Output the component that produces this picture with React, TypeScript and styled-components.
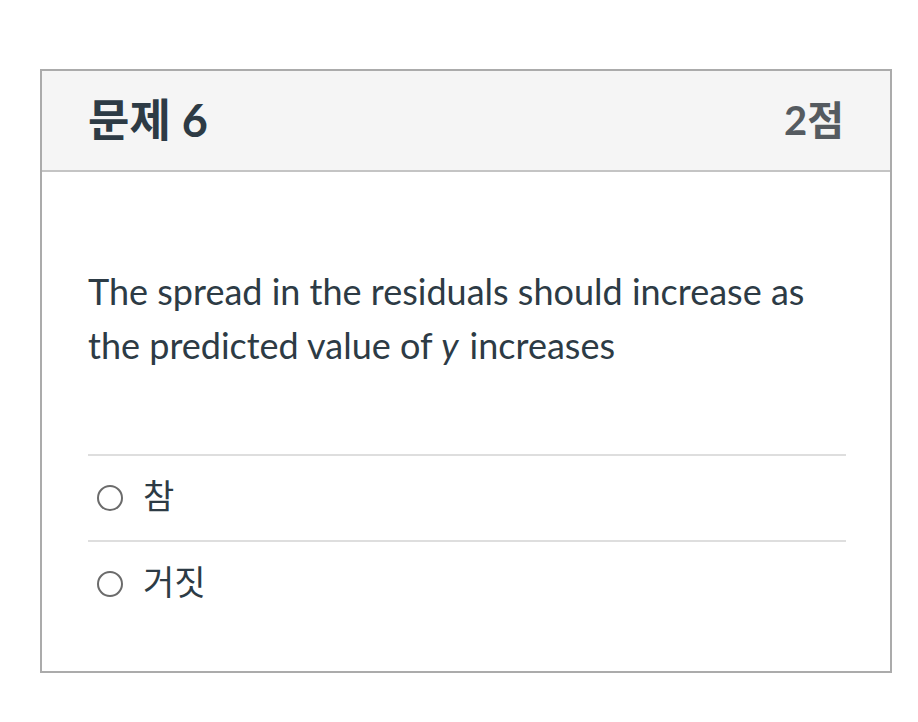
import { createGlobalStyle, styled } from "styled-components"

const Global = createGlobalStyle`
    html, body {
        margin: 0;
        padding: 0;
        background: #ffffff;
    }
    body {
        font-family: Lato, "Noto Sans CJK KR", "Noto Sans", sans-serif;
        color: #2d3b45;
    }
`

const Page = styled.div`
    width: 918px;
    height: 722px;
    padding: 69px 0 0 40px;
    box-sizing: border-box;
`

const Card = styled.section`
    width: 852px;
    height: 604px;
    box-sizing: border-box;
    border: 2px solid #ababab;
    background: #fff;
    display: flex;
    flex-direction: column;
`

const Header = styled.header`
    height: 101px;
    box-sizing: border-box;
    background: #f5f5f5;
    border-bottom: 2px solid #c4c4c4;
    display: flex;
    align-items: center;
    justify-content: space-between;
    padding: 0 46px 6px 46px;
`

const Title = styled.h2`
    margin: 0;
    font-size: 45px;
    font-weight: 700;
    color: #2d3b45;
`

const Points = styled.span`
    font-size: 40px;
    font-weight: 700;
    color: #555b60;
`

const Body = styled.div`
    padding: 92px 44px 0 46px;
    display: flex;
    flex-direction: column;
`

const Question = styled.p`
    margin: 0 0 82px 0;
    font-size: 36px;
    line-height: 54px;
    color: #2d3b45;
`

const Variable = styled.em`
    font-style: italic;
    padding-right: 2px;
`

const Answers = styled.div`
    display: flex;
    flex-direction: column;
`

const Answer = styled.label`
    height: 86px;
    box-sizing: border-box;
    border-top: 2px solid #dedede;
    display: flex;
    align-items: center;
    padding: 0 0 0 9px;
    gap: 20px;
`

const Radio = styled.span`
    width: 26px;
    height: 26px;
    box-sizing: border-box;
    border: 2px solid #6b6b6b;
    border-radius: 50%;
    flex: none;
`

const AnswerText = styled.span`
    font-size: 34px;
    font-family: "Noto Sans CJK KR", sans-serif;
    font-weight: 400;
    color: #2d3b45;
    margin-top: -8px;
`

const answers = ["참", "거짓"]

const App = () => {
    return (
        <>
            <Global />
            <Page>
                <Card>
                    <Header>
                        <Title>문제 6</Title>
                        <Points>2점</Points>
                    </Header>
                    <Body>
                        <Question>
                            The spread in the residuals should increase as the predicted value of <Variable>y</Variable> increases
                        </Question>
                        <Answers>
                            {answers.map((a) => (
                                <Answer key={a}>
                                    <Radio />
                                    <AnswerText>{a}</AnswerText>
                                </Answer>
                            ))}
                        </Answers>
                    </Body>
                </Card>
            </Page>
        </>
    )
}

export default App
